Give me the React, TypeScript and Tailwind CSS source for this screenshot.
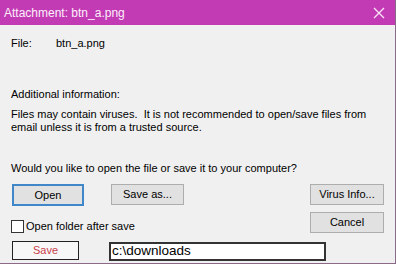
import React from "react";

export default function App() {
  const font = { fontFamily: '"Liberation Sans", Arial, sans-serif' };
  return (
    <div
      className="w-[396px] h-[265px] bg-white overflow-hidden text-[11px] text-black"
      style={font}
    >
      <div className="w-[396px] h-[264px] bg-[#f0f0f0] border-r border-b border-[#8a6a88] flex flex-col">
        <div className="shrink-0 h-[25px] bg-[#c23bb4] flex items-center justify-between pl-[4px] pr-[10px] text-[#fdeefb] text-[12px] leading-none">
          <span>Attachment: btn_a.png</span>
          <svg width="12" height="12" viewBox="0 0 12 12" className="block">
            <path d="M1 1 L11 11 M11 1 L1 11" stroke="#fbe6f8" strokeWidth="1.3" fill="none" />
          </svg>
        </div>
        <div className="shrink-0 flex flex-col pl-[11px] leading-[13px]">
          <div className="flex mt-[12px]">
            <span className="w-[45px]">File:</span>
            <span>btn_a.png</span>
          </div>
          <div className="mt-[38px]">Additional information:</div>
          <div className="mt-[7px]">
            Files may contain viruses.&nbsp; It is not recommended to open/save files from
            <br />
            email unless it is from a trusted source.
          </div>
          <div className="mt-[28px]">Would you like to open the file or save it to your computer?</div>
        </div>
        <div className="shrink-0 flex items-start mt-[9px] pl-[12px]">
          <button className="w-[72px] h-[22px] border-2 border-[#3f87c8] bg-[#e1e1e1] flex items-center justify-center">
            Open
          </button>
          <button className="ml-[27px] w-[73px] h-[21px] border border-[#adadad] bg-[#e1e1e1] flex items-center justify-center">
            Save as...
          </button>
          <button className="ml-auto mr-[11px] w-[74px] h-[21px] border border-[#adadad] bg-[#e1e1e1] flex items-center justify-center">
            Virus Info...
          </button>
        </div>
        <div className="shrink-0 flex items-start mt-[6px] pl-[11px]">
          <label className="flex items-center mt-[6px] gap-[2px]">
            <span className="w-[13px] h-[13px] border border-[#333] bg-white block" />
            <span>Open folder after save</span>
          </label>
          <button className="ml-auto mr-[11px] w-[74px] h-[21px] border border-[#adadad] bg-[#e1e1e1] flex items-center justify-center">
            Cancel
          </button>
        </div>
        <div className="shrink-0 flex items-start mt-[6px] pl-[12px]">
          <button className="w-[67px] h-[19px] border border-[#222] bg-[#f7f7f7] text-[#c8404a] flex items-center justify-center">
            Save
          </button>
          <div className="ml-[30px] mt-[1px] w-[217px] h-[19px] border-2 border-[#333] bg-white flex items-center pl-[1px] text-[13.5px]">
            c:\downloads
          </div>
        </div>
      </div>
    </div>
  );
}
